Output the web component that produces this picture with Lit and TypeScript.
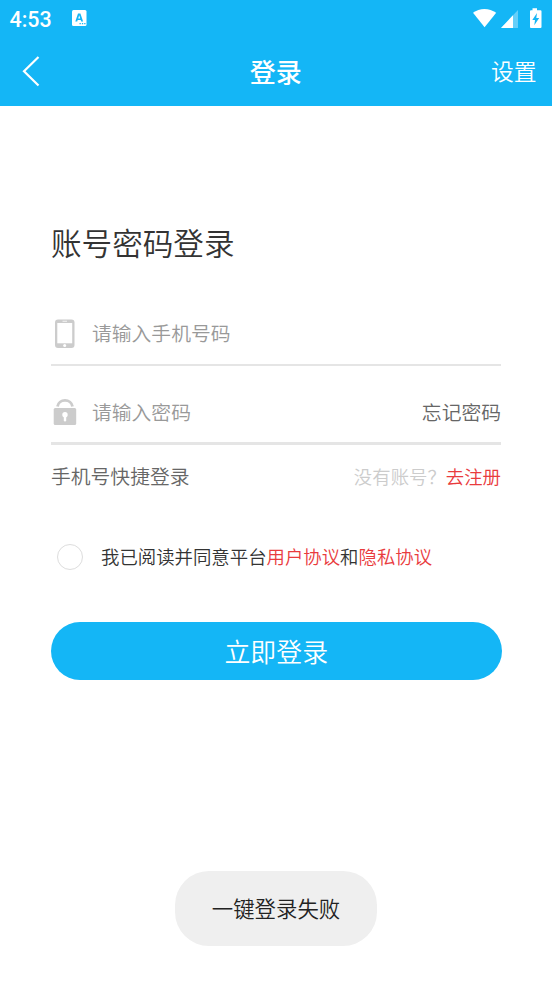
import { LitElement, html, css } from "lit";
import { customElement } from "lit/decorators.js";

@customElement("app-root")
export class AppRoot extends LitElement {
  static styles = css`
    :host {
      display: block;
      position: relative;
      box-sizing: border-box;
      height: 983px;
      overflow: hidden;
      background: #fff;
      color: #333;
      font-family: "Noto Sans CJK SC", sans-serif;
      font-size: 19.8px;
      font-weight: 350;
      white-space: nowrap;
    }
    svg { display: block; flex: none; }
    .top { background: #14b6f6; color: #fff; height: 106px; }
    .status { display: flex; align-items: center; height: 36px; padding: 0 9px 0 9.5px; }
    .clock { font: 500 21.4px/36px Roboto, sans-serif; width: 62.5px; padding-top: 2px; box-sizing: border-box; height: 36px; }
    .signals { margin-left: auto; }
    .bar { display: grid; grid-template-columns: 1fr auto 1fr; align-items: center; height: 70px; line-height: 70px; padding: 0 15.5px 0 15px; }
    .back { margin-left: 5px; }
    .title { font-size: 26px; font-weight: 500; height: 70px; }
    .set { justify-self: end; font-size: 22.8px; height: 70px; }
    main { padding: 0 51px; }
    h1 { margin: 0; padding-top: 112px; font-size: 30.6px; font-weight: 350; line-height: 48px; height: 48px; }
    .field { display: flex; align-items: center; color: #999; }
    .phone { height: 60px; margin-top: 38px; border-bottom: 2px solid #e5e5e5; line-height: 32px; }
    .phone span { height: 34px; }
    .pass { height: 61px; margin-top: 15px; border-bottom: 3px solid #e5e5e5; }
    .icon { width: 41px; }
    .forgot { margin-left: auto; color: #666; }
    .links { display: flex; justify-content: space-between; align-items: center; height: 61px; color: #666; }
    .hint { font-size: 18.4px; color: #ccc; }
    .red { color: #e93b3d; }
    .agree { display: flex; align-items: center; height: 40px; margin-top: 31px; font-size: 18.4px; padding-left: 6px; }
    .agree > span:last-child { height: 29px; line-height: 27px; }
    .circle { box-sizing: border-box; width: 26px; height: 26px; border: 1px solid #ddd; border-radius: 50%; margin-right: 18px; }
    .submit { display: block; width: 450.5px; height: 58.3px; margin: 45px 0 0; padding: 0; border: 0; border-radius: 30px; background: #14b6f6; color: #fff; font: 350 25.9px/56px "Noto Sans CJK SC", sans-serif; }
    .toast { position: absolute; left: 175px; top: 871px; width: 202px; height: 75px; line-height: 74px; border-radius: 34px; background: #efefef; color: #222; font-size: 21.4px; text-align: center; }
  `;

  render() {
    return html`
      <div class="top">
        <div class="status">
          <span class="clock">4:53</span>
          <svg width="15" height="16" viewBox="0 0 15 16">
            <rect width="14.5" height="16" rx="1.5" fill="#fff"/>
            <path fill="#14b6f6" fill-rule="evenodd" d="M3.300 11.500 6 3.500h2.400l2.700 8H9.200L8.700 9.900H5.700L5.200 11.500ZM6.200 8.400h2L7.200 5.300Z"/>
            <path d="M7.500 13.700h1.300M9.900 13.700h1.300M12.200 13.700h1.300" stroke="#14b6f6" stroke-width="1.200"/>
          </svg>
          <svg class="signals" width="72" height="24" viewBox="0 0 72 24">
            <path d="M2 6.800C8.500 1.700 18.300 1.700 25.200 6.800L13.600 21.200Z" fill="#fff"/>
            <path d="M30 22 47 4V22Z" fill="#fff" opacity=".35"/>
            <path d="M30 22 42 9.200V22Z" fill="#fff"/>
            <path d="M61.500 2.200h4.500v2h3.500a1 1 0 0 1 1 1v15.700a1 1 0 0 1-1 1H60a1 1 0 0 1-1-1V5.200a1 1 0 0 1 1-1h1.500Z" fill="#fff"/>
            <path d="M66 7 61.300 14h2.700l-.7 5.200L68.200 12h-2.900Z" fill="#14b6f6"/>
          </svg>
        </div>
        <div class="bar">
          <svg class="back" width="24" height="32" viewBox="0 0 24 32">
            <path d="M18.500 2 4 16.200 18.500 30.500" fill="none" stroke="#fff" stroke-width="2.200"/>
          </svg>
          <span class="title">登录</span>
          <span class="set">设置</span>
        </div>
      </div>
      <main>
        <h1>账号密码登录</h1>
        <div class="field phone">
          <svg class="icon" width="41" height="30" viewBox="0 0 41 30">
            <rect x="4" y=".5" width="19.500" height="28.500" rx="3" fill="#ccc"/>
            <rect x="6.300" y="4" width="14.900" height="20.300" fill="#fff"/>
            <path d="M11.500 2.300h4.500" stroke="#eee" stroke-width="1.200"/>
            <circle cx="13.700" cy="26.600" r="1.500" fill="#fff"/>
          </svg>
          <span>请输入手机号码</span>
        </div>
        <div class="field pass">
          <svg class="icon" width="41" height="28" viewBox="0 0 41 28">
            <path d="M6.500 8.400A7.600 7.200 0 0 1 21.500 8.400" fill="none" stroke="#ccc" stroke-width="2.800"/>
            <rect x="2.700" y="10" width="22.500" height="17" rx="1.500" fill="#ccc"/>
            <circle cx="14" cy="16.800" r="2.700" fill="#fff"/>
            <path d="M14 17.500v4.700" stroke="#fff" stroke-width="2.400" stroke-linecap="round"/>
          </svg>
          <span>请输入密码</span>
          <span class="forgot">忘记密码</span>
        </div>
        <div class="links">
          <span>手机号快捷登录</span>
          <span class="hint">没有账号？<span class="red">去注册</span></span>
        </div>
        <div class="agree">
          <span class="circle"></span>
          <span>我已阅读并同意平台<span class="red">用户协议</span>和<span class="red">隐私协议</span></span>
        </div>
        <button class="submit">立即登录</button>
      </main>
      <div class="toast">一键登录失败</div>
    `;
  }
}
